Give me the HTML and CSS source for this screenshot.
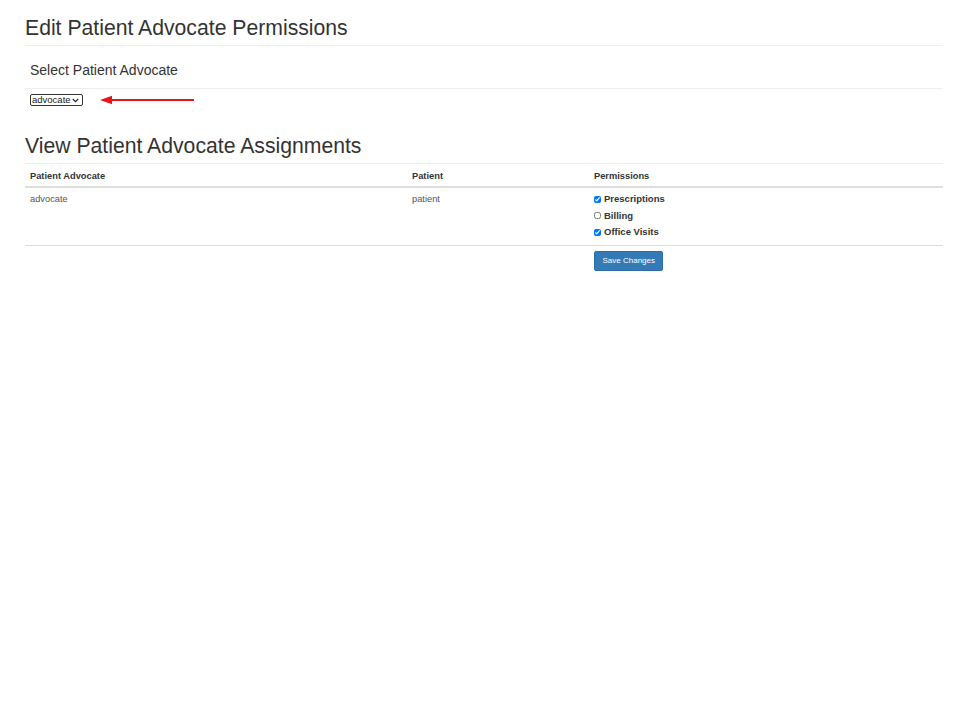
FILE: index.html
```html
<!DOCTYPE html>
<html>
<head>
<meta charset="utf-8">
<link rel="stylesheet" href="styles.css">
</head>
<body>
<div class="container">
  <h1 class="page-title">Edit Patient Advocate Permissions</h1>
  <h2 class="sub-title">Select Patient Advocate</h2>
  <div class="select-row">
    <span class="select-wrap">
      <select class="adv-select"><option>advocate</option></select>
      <svg class="chev" width="7" height="5" viewBox="0 0 7 5"><path d="M0.8 1 L3.5 3.7 L6.2 1" fill="none" stroke="#222" stroke-width="1.1"/></svg>
    </span>
    <svg class="arrow" width="94" height="10" viewBox="0 0 94 10">
      <polygon points="0,5 12,0.8 12,9.2" fill="#e8141a"/>
      <rect x="10" y="4" width="84" height="2" fill="#e8141a"/>
    </svg>
  </div>
  <h1 class="page-title">View Patient Advocate Assignments</h1>
  <table class="table">
    <thead>
      <tr><th class="c1">Patient Advocate</th><th class="c2">Patient</th><th class="c3">Permissions</th></tr>
    </thead>
    <tbody>
      <tr>
        <td>advocate</td>
        <td>patient</td>
        <td>
          <label class="perm"><input type="checkbox" checked> Prescriptions</label>
          <label class="perm"><input type="checkbox"> Billing</label>
          <label class="perm"><input type="checkbox" checked> Office Visits</label>
        </td>
      </tr>
      <tr>
        <td></td><td></td>
        <td><button class="btn">Save Changes</button></td>
      </tr>
    </tbody>
  </table>
</div>
</body>
</html>
```

FILE: styles.css
```css
* { box-sizing: border-box; }
body {
  margin: 0;
  font-family: "Liberation Sans", Arial, sans-serif;
  color: #333;
  background: #fff;
}
.container {
  padding: 0 17px 0 25px;
}
.page-title {
  font-size: 21.2px;
  font-weight: normal;
  margin: 0;
  padding: 16px 0 5px;
  line-height: 24px;
  border-bottom: 1px solid #eee;
}
.sub-title {
  font-size: 14px;
  font-weight: normal;
  margin: 0;
  padding: 16px 0 10px 5px;
  line-height: 16px;
  border-bottom: 1px solid #eee;
}
.select-row {
  display: flex;
  align-items: flex-start;
  padding: 5px 0 0 5px;
  height: 29px;
}
.select-wrap {
  position: relative;
  display: inline-block;
}
.adv-select {
  appearance: none;
  -webkit-appearance: none;
  display: block;
  font-family: "Liberation Sans", Arial, sans-serif;
  font-size: 9.5px;
  line-height: 10px;
  width: 53px;
  height: 12px;
  padding: 0 0 0 1px;
  border: 1px solid #333;
  border-radius: 2px;
  background: #fff;
  color: #222;
}
.chev {
  position: absolute;
  right: 4px;
  top: 4px;
  pointer-events: none;
}
.arrow { margin-left: 17px; margin-top: 1px; }
.table {
  width: 100%;
  border-collapse: collapse;
  font-size: 9.3px;
}
.table th {
  text-align: left;
  font-weight: bold;
  padding: 6px 5px 4px;
  line-height: 12px;
  border-bottom: 2px solid #ddd;
}
.table td {
  vertical-align: top;
  padding: 5px 5px 2px;
  line-height: 12px;
  border-top: 1px solid #ddd;
  color: #555;
}
.table tbody tr:first-child td { border-top: 0; }
.c1 { width: 382px; }
.c2 { width: 182px; }
.perm {
  display: flex;
  align-items: center;
  font-weight: bold;
  color: #333;
  height: 12px;
  margin-bottom: 4.5px;
  font-size: 9.5px;
}
.perm input {
  margin: 0 3px 0 0;
  width: 7px;
  height: 7px;
}
.btn {
  font-family: "Liberation Sans", Arial, sans-serif;
  font-size: 8px;
  color: #fff;
  background: #337ab7;
  border: 1px solid #2e6da4;
  border-radius: 2px;
  padding: 0 7.5px;
  height: 20px;
}
```
